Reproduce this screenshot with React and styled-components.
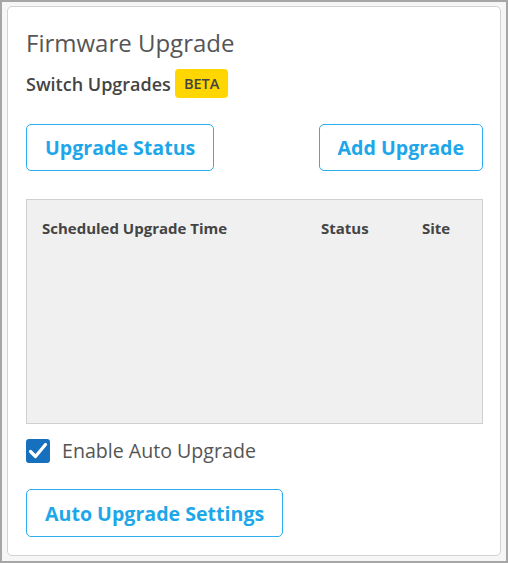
import React from "react";
import styled, { createGlobalStyle } from "styled-components";

const Global = createGlobalStyle`
  html, body { margin: 0; padding: 0; }
  body { font-family: "Open Sans", "Noto Sans", sans-serif; }
  * { box-sizing: border-box; }
`;

const Frame = styled.div`
  width: 508px;
  height: 563px;
  border: 2px solid #a6a6a6;
  background: #f6f6f6;
  padding: 4px 5px 5px 5px;
`;

const Card = styled.div`
  height: 100%;
  background: #fff;
  border: 1px solid #d2d2d2;
  border-radius: 5px;
  padding: 20px 17px 0 18px;
  display: flex;
  flex-direction: column;
`;

const Title = styled.h1`
  margin: 0;
  font-size: 24px;
  font-weight: 400;
  color: #555;
  line-height: 32px;
`;

const SubRow = styled.div`
  display: flex;
  align-items: center;
  gap: 4px;
  margin-top: 10px;
`;

const Sub = styled.span`
  font-size: 18px;
  font-weight: 600;
  color: #444;
`;

const Badge = styled.span`
  background: #ffd600;
  color: #444;
  font-size: 14.5px;
  font-weight: 600;
  border-radius: 4px;
  height: 29px;
  padding: 0 9px;
  display: inline-flex;
  align-items: center;
`;

const ButtonRow = styled.div`
  display: flex;
  justify-content: space-between;
  margin-top: 26px;
`;

const OutlineButton = styled.button`
  font-family: inherit;
  background: #fff;
  border: 1px solid #2aaeee;
  border-radius: 5px;
  color: #1da7ea;
  font-size: 19.6px;
  font-weight: 700;
  height: 47px;
  padding: 0 18px;
  cursor: pointer;
  align-self: flex-start;
`;

const Table = styled.div`
  margin-top: 28px;
  height: 225px;
  background: #f0f0f0;
  border: 1px solid #d0d0d0;
`;

const HeadRow = styled.div`
  display: grid;
  grid-template-columns: 279px 101px 1fr;
  padding: 18px 0 0 15px;
`;

const Th = styled.div`
  font-size: 15px;
  font-weight: 700;
  color: #444;
`;

const CheckRow = styled.label`
  display: flex;
  align-items: center;
  gap: 12px;
  margin-top: 13px;
`;

const Box = styled.span`
  width: 24px;
  height: 24px;
  border-radius: 3px;
  background: #1770bd;
  display: inline-flex;
  align-items: center;
  justify-content: center;
`;

const CheckLabel = styled.span`
  font-size: 19.6px;
  color: #555;
`;

const SettingsButton = styled(OutlineButton)`
  margin-top: 25px;
  height: 48px;
`;

export default function App() {
  return (
    <>
      <Global />
      <Frame>
        <Card>
          <Title>Firmware Upgrade</Title>
          <SubRow>
            <Sub>Switch Upgrades</Sub>
            <Badge>BETA</Badge>
          </SubRow>
          <ButtonRow>
            <OutlineButton>Upgrade Status</OutlineButton>
            <OutlineButton>Add Upgrade</OutlineButton>
          </ButtonRow>
          <Table>
            <HeadRow>
              <Th>Scheduled Upgrade Time</Th>
              <Th>Status</Th>
              <Th>Site</Th>
            </HeadRow>
          </Table>
          <CheckRow>
            <Box>
              <svg width="24" height="24" viewBox="0 0 24 24">
                <path d="M4.5 12.5 L9.5 17.5 L19.5 5.5" fill="none" stroke="#fff" strokeWidth="3.2" strokeLinecap="round" strokeLinejoin="round" />
              </svg>
            </Box>
            <CheckLabel>Enable Auto Upgrade</CheckLabel>
          </CheckRow>
          <SettingsButton>Auto Upgrade Settings</SettingsButton>
        </Card>
      </Frame>
    </>
  );
}
